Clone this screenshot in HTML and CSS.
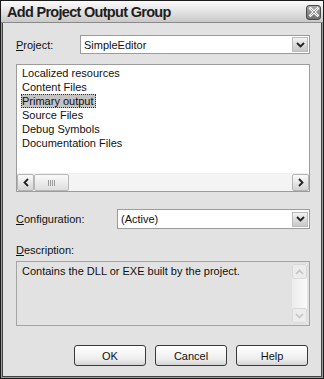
FILE: index.html
```html
<!DOCTYPE html>
<html>
<head>
<meta charset="utf-8">
<link rel="stylesheet" href="styles.css">
</head>
<body>
<div class="window">
  <div class="titlebar">
    <span class="title">Add Project Output Group</span>
    <span class="close">
      <svg width="12" height="12" viewBox="0 0 12 12"><path d="M2.5 2.5 L9.5 9.5 M9.5 2.5 L2.5 9.5" stroke="#fff" stroke-width="2.6" stroke-linecap="square"/><path d="M2.5 2.5 L9.5 9.5 M9.5 2.5 L2.5 9.5" stroke="#666" stroke-width="0.7"/></svg>
    </span>
  </div>
  <div class="content">
    <div class="row row-project">
      <div class="label label-project"><u>P</u>roject:</div>
      <div class="combo combo-project">
        <span class="combo-text">SimpleEditor</span>
        <span class="combo-btn"><svg width="9" height="6" viewBox="0 0 9 6"><path d="M1 1 L4.5 4.5 L8 1" fill="none" stroke="#222" stroke-width="1.8"/></svg></span>
      </div>
    </div>
    <div class="listbox">
      <div class="items">
        <div class="item">Localized resources</div>
        <div class="item">Content Files</div>
        <div class="item selected">Primary output</div>
        <div class="item">Source Files</div>
        <div class="item">Debug Symbols</div>
        <div class="item">Documentation Files</div>
      </div>
      <div class="hscroll">
        <span class="sbtn"><svg width="6" height="9" viewBox="0 0 6 9"><path d="M5 1 L1.5 4.5 L5 8" fill="none" stroke="#222" stroke-width="1.8"/></svg></span>
        <span class="thumb"><svg width="8" height="6" viewBox="0 0 8 6"><path d="M0.5 0 V6 M2.5 0 V6 M4.5 0 V6 M6.5 0 V6" stroke="#9a9a9a" stroke-width="1"/></svg></span>
        <span class="track"></span>
        <span class="sbtn"><svg width="6" height="9" viewBox="0 0 6 9"><path d="M1 1 L4.5 4.5 L1 8" fill="none" stroke="#222" stroke-width="1.8"/></svg></span>
      </div>
    </div>
    <div class="row row-config">
      <div class="label label-config"><u>C</u>onfiguration:</div>
      <div class="combo combo-config">
        <span class="combo-text">(Active)</span>
        <span class="combo-btn"><svg width="9" height="6" viewBox="0 0 9 6"><path d="M1 1 L4.5 4.5 L8 1" fill="none" stroke="#222" stroke-width="1.8"/></svg></span>
      </div>
    </div>
    <div class="desc-label"><u>D</u>escription:</div>
    <div class="descbox">
      <div class="desc-text">Contains the DLL or EXE built by the project.</div>
      <div class="vscroll">
        <span class="vbtn"><svg width="9" height="6" viewBox="0 0 9 6"><path d="M1 5 L4.5 1.5 L8 5" fill="none" stroke="#c4c4c4" stroke-width="1.6"/></svg></span>
        <span class="vtrack"></span>
        <span class="vbtn"><svg width="9" height="6" viewBox="0 0 9 6"><path d="M1 1 L4.5 4.5 L8 1" fill="none" stroke="#c4c4c4" stroke-width="1.6"/></svg></span>
      </div>
    </div>
    <div class="buttons">
      <button class="btn">OK</button>
      <button class="btn">Cancel</button>
      <button class="btn">Help</button>
    </div>
  </div>
</div>
</body>
</html>
```
FILE: styles.css
```css
html, body {
  margin: 0;
  padding: 0;
  background: #fff;
}
.window {
  box-sizing: border-box;
  width: 324px;
  height: 379px;
  background: #e2e2e2;
  border: 1px solid #1a1a1a;
  box-shadow: inset 1px 0 0 #9a9a9a, inset -1px 0 0 #9a9a9a, inset 0 -1px 0 #9a9a9a, inset 2px 0 0 #444, inset -2px 0 0 #444, inset 0 -2px 0 #444;
  font-family: "Liberation Sans", Arial, sans-serif;
  font-size: 11px;
  color: #111;
  display: flex;
  flex-direction: column;
}
.titlebar {
  height: 21px;
  display: flex;
  align-items: center;
  justify-content: space-between;
  padding: 0 2px 0 6px;
  background: linear-gradient(to bottom, #fafafa 0%, #e8e8e8 40%, #c9c9c9 100%);
  border-bottom: 1px solid #8a8a8a;
}
.title {
  font-family: "Liberation Sans", Arial, sans-serif;
  font-weight: bold;
  font-size: 14.5px;
  letter-spacing: -0.7px;
  color: #1e1e1e;
  padding-top: 1px;
}
.close {
  width: 15px;
  height: 15px;
  box-sizing: border-box;
  border: 1px solid #4a4a4a;
  border-radius: 3px;
  background: linear-gradient(to bottom, #a8a8a8, #6e6e6e);
  display: flex;
  align-items: center;
  justify-content: center;
  margin-top: 1px;
}
.content {
  flex: 1;
  display: flex;
  flex-direction: column;
  padding: 0 13px 0 15px;
}
.row {
  display: flex;
  align-items: center;
}
.label {
  flex: none;
  line-height: 14px;
  box-sizing: border-box;
}
.label-project {
  width: 64px;
  min-width: 64px;
}
.label-config {
  width: 101px;
  min-width: 101px;
}
.row-project {
  margin-top: 12px;
}
.row-config {
  margin-top: 17px;
}
.combo {
  flex: 1;
  min-width: 0;
  height: 20px;
  box-sizing: border-box;
  background: #fff;
  border: 1px solid #9c9c9c;
  display: flex;
  align-items: center;
  justify-content: space-between;
}
.combo-project {
  height: 19px;
}
.combo-text {
  padding-left: 3px;
}
.combo-btn {
  width: 16px;
  height: 15px;
  box-sizing: border-box;
  margin-right: 1px;
  border: 1px solid #bbb;
  background: linear-gradient(to bottom, #f2f2f2, #c8c8c8);
  display: flex;
  align-items: center;
  justify-content: center;
}
.listbox {
  margin-top: 10px;
  height: 128px;
  box-sizing: border-box;
  background: #fff;
  border: 1px solid #9c9c9c;
  display: flex;
  flex-direction: column;
}
.items {
  flex: 1;
  padding: 1px 0 0 4px;
}
.item {
  height: 14px;
  line-height: 14px;
  padding: 0 2px 0 1px;
  display: table;
}
.item.selected {
  background: #c4c4c4;
  outline: 1px dotted #333;
  outline-offset: -1px;
}
.hscroll {
  height: 17px;
  display: flex;
  background: #f4f4f4;
  border-top: 1px solid #f0f0f0;
}
.sbtn {
  width: 17px;
  box-sizing: border-box;
  border: 1px solid #b4b4b4;
  border-radius: 2px;
  background: linear-gradient(to bottom, #fafafa, #d4d4d4);
  display: flex;
  align-items: center;
  justify-content: center;
}
.thumb {
  width: 35px;
  box-sizing: border-box;
  border: 1px solid #b8b8b8;
  border-radius: 2px;
  background: linear-gradient(to bottom, #fafafa, #dedede);
  display: flex;
  align-items: center;
  justify-content: center;
}
.track {
  flex: 1;
}
.desc-label {
  margin-top: 14px;
  line-height: 14px;
}
.descbox {
  margin-top: 4px;
  height: 65px;
  box-sizing: border-box;
  border: 1px solid #a4a4a4;
  background: #e2e2e2;
  display: flex;
}
.desc-text {
  flex: 1;
  padding: 2px 0 0 5px;
  line-height: 14px;
}
.vscroll {
  width: 15px;
  margin: 2px 2px 2px 0;
  display: flex;
  flex-direction: column;
  background: linear-gradient(to right, #ececec, #fafafa);
}
.vbtn {
  height: 15px;
  box-sizing: border-box;
  border: 1px solid #dadada;
  border-radius: 2px;
  background: #ececec;
  display: flex;
  align-items: center;
  justify-content: center;
}
.vtrack {
  flex: 1;
}
.buttons {
  margin-top: 19px;
  display: flex;
  justify-content: flex-end;
  gap: 9px;
  padding-right: 2px;
}
.btn {
  width: 72px;
  height: 21px;
  box-sizing: border-box;
  border: 1px solid #3a3a3a;
  border-radius: 3px;
  background: linear-gradient(to bottom, #ffffff, #ededed 70%, #d4d4d4);
  font-family: "Liberation Sans", Arial, sans-serif;
  font-size: 11px;
  color: #111;
  padding: 0;
}
```
